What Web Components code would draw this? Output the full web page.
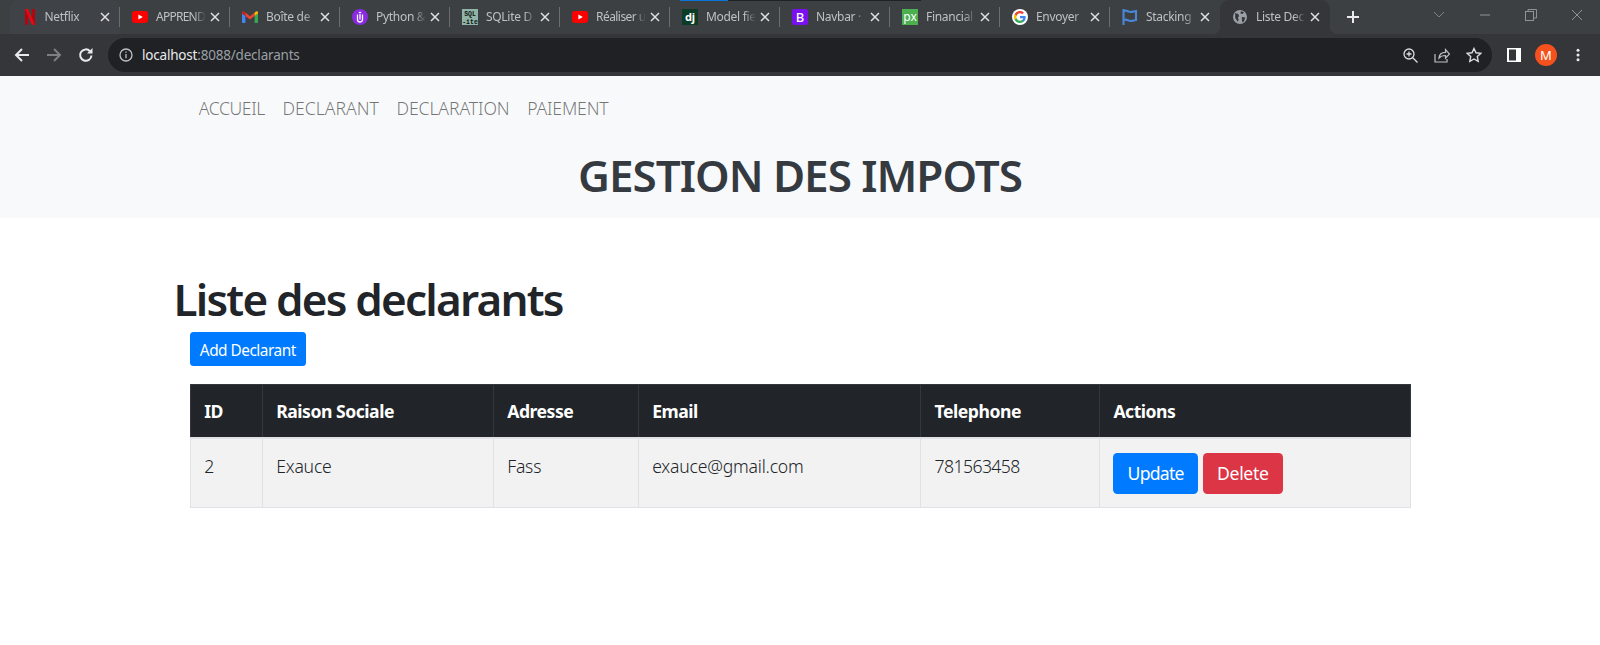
<!DOCTYPE html>
<html lang="fr"><head><meta charset="utf-8"><title>Liste Declarants</title>
<style>
html,body{margin:0;padding:0;background:#fff}
body{font-family:"Noto Sans","Open Sans",sans-serif;color:#212529;width:1600px;height:645px;overflow:hidden}
</style></head><body>
<browser-chrome>
  <chrome-tab slot="tabs" title-text="Netflix" icon="netflix" hover style="--tml:7px"></chrome-tab>
  <chrome-tab slot="tabs" title-text="APPREND" icon="youtube" style="--tls:-.75px"></chrome-tab>
  <chrome-tab slot="tabs" title-text="Boîte de" icon="gmail"></chrome-tab>
  <chrome-tab slot="tabs" title-text="Python &amp;" icon="clip"></chrome-tab>
  <chrome-tab slot="tabs" title-text="SQLite D" icon="sqlite"></chrome-tab>
  <chrome-tab slot="tabs" title-text="Réaliser u" icon="youtube" style="--tls:-.55px"></chrome-tab>
  <chrome-tab slot="tabs" title-text="Model fie" icon="django"></chrome-tab>
  <chrome-tab slot="tabs" title-text="Navbar ·" icon="bootstrap"></chrome-tab>
  <chrome-tab slot="tabs" title-text="Financial" icon="px"></chrome-tab>
  <chrome-tab slot="tabs" title-text="Envoyer" icon="google"></chrome-tab>
  <chrome-tab slot="tabs" title-text="Stacking" icon="flag" nosep></chrome-tab>
  <chrome-tab slot="tabs" title-text="Liste Dec" icon="globe" active nosep></chrome-tab>
</browser-chrome>
<site-header>
  <nav-link style="--ls:-.4px">ACCUEIL</nav-link><nav-link style="--ls:0px">DECLARANT</nav-link><nav-link style="--ls:-.09px">DECLARATION</nav-link><nav-link style="--ls:-.17px">PAIEMENT</nav-link>
  <span slot="title">GESTION DES IMPOTS</span>
</site-header>
<declarant-page heading="Liste des declarants">
  <ui-button slot="action" size="sm" tone="primary">Add Declarant</ui-button>
  <declarant-table slot="table"></declarant-table>
</declarant-page>

<script>
const ICONS={
netflix:`<svg width="10" height="16" viewBox="3 0 10 16"><path d="M3 0h3.200v15.500L3 16z" fill="#b1060f"/><path d="M9.800 0H13v16l-3.200-.5z" fill="#b1060f"/><path d="M3 0h3.200L13 16l-3.200-.5z" fill="#e50914"/></svg>`,
youtube:`<svg width="16" height="12" viewBox="0 0 16 12"><rect width="16" height="12" rx="3" fill="#f00"/><path d="M6.400 3.400v5.200L10.800 6z" fill="#fff"/></svg>`,
gmail:`<svg width="16" height="12" viewBox="0 0 16 12"><path d="M0 2.200V11a1 1 0 0 0 1 1h2.400V5z" fill="#4285f4"/><path d="M16 2.200V11a1 1 0 0 1-1 1h-2.400V5z" fill="#34a853"/><path d="M0 2.400 3.400 5V1.600L2 .5C1.100-.1 0 .6 0 1.600z" fill="#c5221f"/><path d="M3.400 1.600 8 5.300l4.600-3.700V5L8 8.400 3.400 5z" fill="#ea4335"/><path d="M16 2.400 12.600 5V1.600L14 .5c.9-.6 2 .1 2 1.100z" fill="#fbbc04"/></svg>`,
clip:`<svg width="16" height="16" viewBox="0 0 16 16"><circle cx="8" cy="8" r="8" fill="#8a2be2"/><path d="M5.500 5.500v5a2.500 2.500 0 0 0 5 0V5.500M8 5v5.500" fill="none" stroke="#fff" stroke-width="1.300"/><path d="M6.800 3.500h2.400" stroke="#fff" stroke-width="1.300"/></svg>`,
sqlite:`<svg width="16" height="16" viewBox="0 0 16 16"><rect width="16" height="16" fill="#8fb5a8"/><text x="8" y="6.500" text-anchor="middle" font-family="Liberation Mono" font-size="6.500" font-weight="700" fill="#111">SQL</text><text x="8" y="14.500" text-anchor="middle" font-family="Liberation Mono" font-size="6.500" font-weight="700" fill="#111">-ite</text></svg>`,
django:`<svg width="16" height="16" viewBox="0 0 16 16"><rect width="16" height="16" fill="#0c3c26"/><text x="8" y="12" text-anchor="middle" font-family="Noto Sans" font-size="11" font-weight="700" fill="#fff">dj</text></svg>`,
bootstrap:`<svg width="16" height="16" viewBox="0 0 16 16"><rect width="16" height="16" rx="2" fill="#7a10f0"/><text x="8" y="13" text-anchor="middle" font-family="Noto Sans" font-size="13" font-weight="500" fill="#fff">B</text></svg>`,
px:`<svg width="16" height="16" viewBox="0 0 16 16"><rect width="16" height="16" fill="#4caf50"/><text x="8" y="12" text-anchor="middle" font-family="Noto Sans" font-size="12" fill="#fff">px</text></svg>`,
google:`<svg width="16" height="16" viewBox="0 0 48 48"><path fill="#fff" d="M24 0a24 24 0 1 0 0 48 24 24 0 0 0 0-48z"/><path fill="#4285f4" d="M41 24.500c0-1.200-.1-2.300-.3-3.500H24v6.600h9.700c-.4 2.200-1.700 4.100-3.600 5.400v4.400h5.800c3.400-3.100 5.100-7.700 5.100-12.900z"/><path fill="#34a853" d="M24 42c4.900 0 8.900-1.600 11.900-4.400L30.100 33.200c-1.600 1.100-3.700 1.700-6.100 1.700-4.700 0-8.700-3.200-10.100-7.400H7.900v4.600C10.900 38 17 42 24 42z"/><path fill="#fbbc04" d="M13.900 27.500c-.8-2.200-.8-4.700 0-7v-4.600h-6c-2.500 5-2.500 11.200 0 16.200z"/><path fill="#ea4335" d="M24 13.100c2.600 0 4.900.9 6.800 2.600l5.100-5.100C32.800 7.700 28.700 6 24 6 17 6 10.900 10 7.900 15.900l6 4.600C15.300 16.300 19.300 13.100 24 13.100z"/></svg>`,
flag:`<svg width="16" height="16" viewBox="0 0 16 16" fill="none" stroke="#4a86d8" stroke-width="2.100"><path d="M1.500 0v16"/><path d="M1.500 2c3 -1.300 4.500 1 7 1s3 -.6 5.500 -1v9c-2.500.4-3 1-5.500 1s-4-2.300-7-1"/></svg>`,
globe:`<svg width="14" height="14" viewBox="0 0 16 16"><circle cx="8" cy="8" r="8" fill="#9aa0a6"/><path d="M2.500 3.500 6 4.500l1 2.500-1.500 1.500L6.500 11 5.500 13.500 2.500 9zM9 1.500l3.500.8-1.500 2.200-2.500-.5zM10 8l4 .5-1.500 4.500-2 1z" fill="#35363a"/></svg>`
};
function comp(name,html,proto={}){
  customElements.define(name,class extends HTMLElement{
    constructor(){super();this.attachShadow({mode:"open"}).innerHTML=typeof html==="function"?html(this):html;}
    connectedCallback(){ if(proto.init) proto.init.call(this); }
  });
}
comp("chrome-tab",`<style>
:host{display:flex;align-items:center;position:relative;box-sizing:border-box;width:110px;height:34px;font:12px "Noto Sans",sans-serif;color:#bdc1c6}
:host([hover]){background:#3f4246;border-radius:8px 8px 0 0}
.ic{width:16px;height:18px;margin-left:12px;display:flex;align-items:center;justify-content:center;flex:none}
.t{margin-left:var(--tml,8.500px);margin-right:calc(8.500px - var(--tml,8.500px));width:50px;flex:none;white-space:nowrap;overflow:hidden;letter-spacing:var(--tls,-.3px);line-height:34px;
  -webkit-mask-image:linear-gradient(90deg,#000 76%,transparent 100%);mask-image:linear-gradient(90deg,#000 76%,transparent 100%)}
.x{margin-left:3.500px;width:10px;height:10px;flex:none;display:block}
.sep{position:absolute;right:0;top:7px;width:1px;height:20px;background:#696c70}
:host([nosep]) .sep{display:none}
:host([active]){background:#35363a;border-radius:9px 9px 0 0}
:host([active])::before,:host([active])::after{content:"";position:absolute;bottom:0;width:8px;height:8px}
:host([active])::before{left:-8px;background:radial-gradient(circle at 0 0,transparent 8px,#35363a 8.500px)}
:host([active])::after{right:-8px;background:radial-gradient(circle at 100% 0,transparent 8px,#35363a 8.500px)}
</style><span class="ic"></span><span class="t"></span>
<svg class="x" viewBox="0 0 10 10"><path d="M1 1l8 8M9 1l-8 8" stroke="#dfe1e5" stroke-width="1.500"/></svg><span class="sep"></span>`,
{init(){const s=this.shadowRoot;s.querySelector(".ic").innerHTML=ICONS[this.getAttribute("icon")];s.querySelector(".t").textContent=this.getAttribute("title-text");}});

comp("browser-chrome",`<style>
:host{display:block;background:#35363a}
.strip{display:flex;height:34px;background:#3c4043;padding-left:9.500px;position:relative}
.loading{position:absolute;left:680px;top:0;width:241px;height:1px;background:#202124}
.loading i{display:block;width:48px;height:1px;background:#0a74d8}
.plus{width:32px;margin-left:7px;display:flex;align-items:center;justify-content:center}
.win{margin-left:auto;display:flex}
.win span{width:46px;height:30px;display:flex;align-items:center;justify-content:center}
.bar{display:flex;height:42px;padding:4px 6px;box-sizing:border-box}
.b{width:32px;height:34px;display:flex;align-items:center;justify-content:center;flex:none}
.url{margin:0 6px;flex:1;background:#202124;border-radius:17px;display:flex;padding:0 2px;align-items:center;font:13.500px "Noto Sans",sans-serif;color:#9aa0a6;letter-spacing:-.2px}
.url b{font-weight:400;color:#e8eaed}
.grow{flex:1}
.avatar{width:22px;height:22px;border-radius:50%;background:#f4511e;color:#fff;font:13px "Noto Sans",sans-serif;display:flex;align-items:center;justify-content:center}
</style>
<div class="strip"><slot name="tabs"></slot>
  <span class="plus"><svg width="14" height="14" viewBox="0 0 14 14"><path d="M7 1v12M1 7h12" stroke="#e8eaed" stroke-width="2"/></svg></span>
  <div class="win">
    <span><svg width="12" height="8" viewBox="0 0 12 8"><path d="M1 1l5 5 5-5" fill="none" stroke="#7f8387"/></svg></span>
    <span><svg width="12" height="2" viewBox="0 0 12 2"><path d="M1 1h10" stroke="#8f9397"/></svg></span>
    <span><svg width="12" height="12" viewBox="0 0 12 12" fill="none" stroke="#8f9397"><rect x=".500" y="2.500" width="8" height="9"/><path d="M3 2.500V.5h8.500v8.500H8.500"/></svg></span>
    <span><svg width="12" height="12" viewBox="0 0 12 12"><path d="M1 1l10 10M11 1L1 11" stroke="#8f9397"/></svg></span>
  </div>
  <div class="loading"><i></i></div>
</div>
<div class="bar">
  <span class="b"><svg width="16" height="16" viewBox="0 0 16 16" fill="none" stroke="#e8eaed" stroke-width="2"><path d="M15 8H2M8 2 2 8l6 6"/></svg></span>
  <span class="b"><svg width="16" height="16" viewBox="0 0 16 16" fill="none" stroke="#7c7f83" stroke-width="2"><path d="M1 8h13M8 2l6 6-6 6"/></svg></span>
  <span class="b"><svg width="16" height="16" viewBox="0 0 16 16" fill="none" stroke="#e8eaed" stroke-width="2"><path d="M13.500 8.500A5.700 5.700 0 1 1 12 4.200"/><path d="M14.500 1v5.500H9z" fill="#e8eaed" stroke="none"/></svg></span>
  <div class="url">
    <span class="b"><svg width="14" height="14" viewBox="0 0 14 14" fill="none" stroke="#bdc1c6" stroke-width="1.300"><circle cx="7" cy="7" r="6"/><path d="M7 6v4.200M7 3.500v1.300"/></svg></span>
    <span><b>localhost</b>:8088/declarants</span><span class="grow"></span>
    <span class="b"><svg width="15" height="15" viewBox="0 0 15 15" fill="none" stroke="#dadce0" stroke-width="1.300"><circle cx="6" cy="6" r="5"/><path d="M9.800 9.800 14.500 14.500M3.500 6h5M6 3.500v5"/></svg></span>
    <span class="b"><svg width="16" height="16" viewBox="0 0 16 16" fill="none" stroke="#bdc1c6" stroke-width="1.200"><path d="M1 7v8h12v-3M5 11c.3-3.700 3-5.700 6.500-5.700V2.500L15.500 7l-4 4.200V8.500C8.500 8.500 6.500 9.200 5 11z"/></svg></span>
    <span class="b"><svg width="16" height="16" viewBox="0 0 16 16" fill="none" stroke="#dadce0" stroke-width="1.400"><path d="M8 1.500l2 4.300 4.700.6-3.400 3.200.9 4.700L8 12l-4.200 2.300.9-4.700L1.300 6.400 6 5.800z"/></svg></span>
  </div>
  <span class="b"><svg width="14" height="14" viewBox="0 0 14 14"><rect width="14" height="14" fill="#fff"/><rect x="2" y="1.500" width="7" height="11" fill="#35363a"/></svg></span>
  <span class="b"><span class="avatar">M</span></span>
  <span class="b"><svg width="4" height="14" viewBox="0 0 4 14" fill="#e8eaed"><circle cx="2" cy="2.300" r="1.500"/><circle cx="2" cy="7" r="1.500"/><circle cx="2" cy="11.700" r="1.500"/></svg></span>
</div>`);

comp("nav-link",`<style>:host{display:block;font:300 17.600px "Noto Sans",sans-serif;color:rgba(0,0,0,.55);line-height:26.400px;padding:0 8.800px;letter-spacing:var(--ls,0)}</style><slot></slot>`);
comp("site-header",`<style>
:host{display:block;background:#f8f9fa;height:142px;box-sizing:border-box;padding-top:19px}
nav{display:flex;padding-left:190px}
h1{margin:28px 0 0;text-align:center;font:575 44px/52.800px "Noto Sans",sans-serif;color:#343a40;letter-spacing:-1.02px}
</style><nav><slot></slot></nav><h1><slot name="title"></slot></h1>`);

comp("ui-button",`<style>
:host{display:inline-block;box-sizing:border-box;color:#fff;border:1.100px solid transparent;border-radius:4.400px;font:400 17.600px/26.400px "Noto Sans",sans-serif;padding:6.600px 13.200px;vertical-align:middle;letter-spacing:var(--ls,-.4px)}
:host([tone=primary]){background:#007bff}
:host([tone=danger]){background:#dc3545}
:host([size=sm]){font-size:15.400px;line-height:23.100px;padding:6.400px 8.800px 2.400px;border-radius:3.500px;letter-spacing:-.5px}
</style><slot></slot>`);

comp("declarant-table",`<style>
:host{display:block;font:17.600px/26.400px "Noto Sans",sans-serif;color:#212529}
table{border-collapse:collapse;table-layout:fixed;width:1221px}
th,td{padding:13.200px;text-align:left;vertical-align:top;border:1px solid #dee2e6}
th{background:#212529;color:#fff;font-weight:700;border-color:#32383e;border-bottom:2px solid #dee2e6;letter-spacing:-.48px}
td{background:#f2f2f2;font-weight:350;letter-spacing:-.2px}
td.tel{letter-spacing:-.58px}
ui-button+ui-button{margin-left:5px}
</style>
<table><colgroup><col style="width:72px"><col style="width:231px"><col style="width:145px"><col style="width:282.400px"><col style="width:178.800px"><col></colgroup>
<thead><tr><th>ID</th><th>Raison Sociale</th><th>Adresse</th><th>Email</th><th>Telephone</th><th>Actions</th></tr></thead>
<tbody><tr><td>2</td><td>Exauce</td><td>Fass</td><td>exauce@gmail.com</td><td class="tel">781563458</td>
<td><ui-button tone="primary" style="--ls:-.75px">Update</ui-button><ui-button tone="danger" style="--ls:-.35px">Delete</ui-button></td></tr></tbody></table>`);

comp("declarant-page",el=>`<style>
:host{display:block;padding:55px 0 0 173.500px}
h1{margin:0;font:575 44px/52.800px "Noto Sans",sans-serif;color:#212529;letter-spacing:-1.78px}
.a{padding:6px 0 0 16.500px;display:block}
.t{padding:18px 0 0 16.500px;display:block}
</style><h1>${el.getAttribute("heading")}</h1><div class="a"><slot name="action"></slot></div><div class="t"><slot name="table"></slot></div>`);
</script>
</body></html>
